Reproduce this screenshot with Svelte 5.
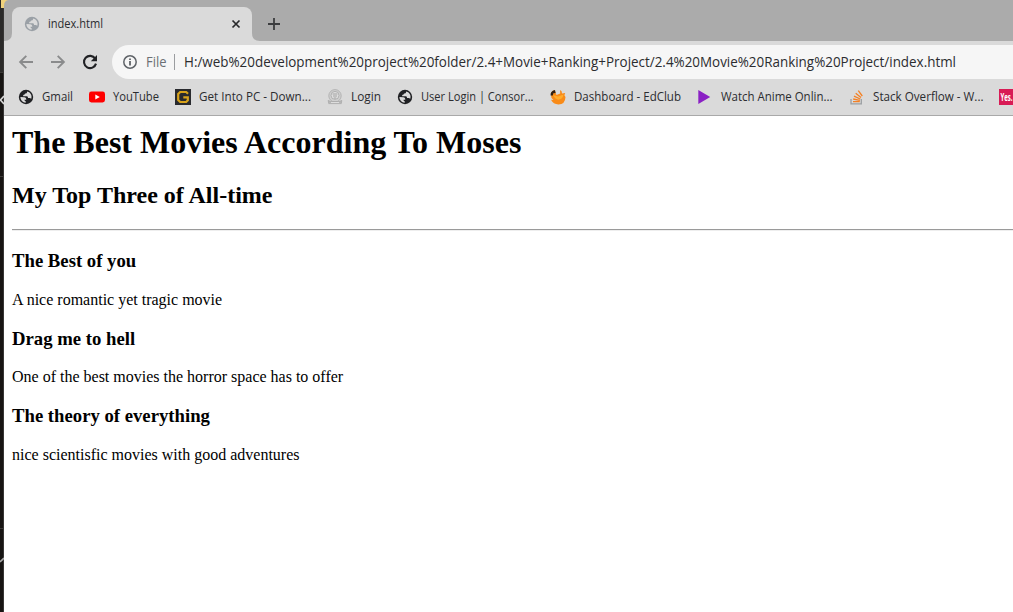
<script>
  const bookmarks = [
    { icon: 'globe', label: 'Gmail', width: 31, slot: 71 },
    { icon: 'youtube', label: 'YouTube', width: 46, slot: 86 },
    { icon: 'getpc', label: 'Get Into PC - Down...', width: 112, slot: 152 },
    { icon: 'camera', label: 'Login', width: 30, slot: 70 },
    { icon: 'globe', label: 'User Login | Consor...', width: 112.5, slot: 153 },
    { icon: 'edclub', label: 'Dashboard - EdClub', width: 107, slot: 147 },
    { icon: 'play', label: 'Watch Anime Onlin...', width: 111.5, slot: 152 },
    { icon: 'stack', label: 'Stack Overflow - W...', width: 110.5, slot: 150 },
    { icon: 'yes', label: '', width: 0, slot: 30 }
  ];

  const movies = [
    { title: 'The Best of you', text: 'A nice romantic yet tragic movie' },
    { title: 'Drag me to hell', text: 'One of the best movies the horror space has to offer' },
    { title: 'The theory of everything', text: 'nice scientisfic movies with good adventures' }
  ];
  const url = 'H:/web%20development%20project%20folder/2.4+Movie+Ranking+Project/2.4%20Movie%20Ranking%20Project/index.html';
</script>

{#snippet label(text, width, size, cls)}
  <svg class="label {cls}" {width} height="20">
    <text x="0" y={size > 13 ? 15 : 14} font-size={size} textLength={width} lengthAdjust="spacingAndGlyphs">{text}</text>
  </svg>
{/snippet}

{#snippet globe(fill, land)}
  <svg class="icon" viewBox="0 0 16 16">
    <circle cx="8" cy="8" r="7.2" {fill} />
    <path d="M9.2 2.5C9.1 4.2 8.3 4.5 7 4.6C6.9 5.6 6.2 6 5.2 6.1V7.3H8.9C9.8 7.4 10 8 10 9H11.6C12.4 9 12.9 9.4 13.1 10.1C14.5 6.8 12.8 3.4 9.2 2.5Z" fill={land} />
    <path d="M2.4 8.1C2.5 11.3 4.9 13.6 7.7 13.7V12.2C6.8 12.1 6.5 11.6 6.5 10.7H8.3C8.3 9.3 7.8 8.5 6.2 8.3Z" fill={land} />
  </svg>
{/snippet}

<div class="screen">
  <div class="edge">
    <svg width="4" height="612" viewBox="0 0 4 612">
      <rect width="4" height="612" fill="#171513" />
      <rect width="4" height="73" fill="#2b2a29" />
      <rect x="1" width="3" height="8" fill="#f0d27c" />
      <path d="M0 72.5H4M0 176.5H4M0 528.5H4" stroke="#3c3a38" />
      <path d="M3.5 8V612" stroke="#373635" />
      <path d="M4 96L0.5 100L4 104" stroke="#d8d8d8" stroke-width="1.6" fill="none" />
      <path d="M0 562L4 558" stroke="#aaa" stroke-width="1.6" />
    </svg>
  </div>
  <div class="window">
    <div class="tabs">
      <svg class="corner" width="8" height="41"><path d="M0 0H4.5Q0 0.5 0 6Z" fill="#f0d27c" /><path d="M0 41Q8 41 8 33V41Z" fill="#dadada" /></svg>
      <div class="tab">
        {@render globe('#9aa0a6', '#dadada')}
        {@render label('index.html', 55, 12, 'title')}
        <svg class="close" width="10" height="10" viewBox="0 0 10 10"><path d="M1.5 1.5L8.5 8.5M8.5 1.5L1.5 8.5" stroke="#28292b" stroke-width="1.7" /></svg>
      </div>
      <svg class="corner" width="8" height="8"><path d="M0 0Q0 8 8 8H0Z" fill="#dadada" /></svg>
      <svg class="plus" width="12" height="12" viewBox="0 0 12 12"><path d="M6 0V12M0 6H12" stroke="#3b3c3e" stroke-width="1.8" /></svg>
    </div>
    <div class="toolbar">
      <svg class="nav" viewBox="0 0 16 16"><path d="M15 8H2.3M8.3 1.8L2.1 8L8.3 14.2" stroke="#8a8b8c" stroke-width="1.9" fill="none" /></svg>
      <svg class="nav" viewBox="0 0 16 16"><path d="M1 8H13.7M7.7 1.8L13.9 8L7.7 14.2" stroke="#8a8b8c" stroke-width="1.9" fill="none" /></svg>
      <svg class="nav" viewBox="0 0 16 16"><path d="M13.2 4.6A6.1 6.1 0 1 0 14 9.6" stroke="#202124" stroke-width="2.1" fill="none" /><path d="M15 1V7.2H8.8Z" fill="#202124" /></svg>
      <div class="address">
        <svg class="info" width="14" height="14" viewBox="0 0 14 14"><circle cx="7" cy="7" r="6.2" fill="none" stroke="#5f6368" stroke-width="1.5" /><path d="M7 6V10.5M7 3.4V5" stroke="#4d5155" stroke-width="1.6" /></svg>
        {@render label('File', 20.5, 14, 'scheme')}
        <span class="divider"></span>
        {@render label(url, 772, 14, 'url')}
      </div>
    </div>
    <div class="bookmarks">
      {#each bookmarks as b}
        <div class="bookmark" style:width="{b.slot}px">
          {#if b.icon === 'globe'}
            {@render globe('#202124', '#dadada')}
          {:else}
            <svg class="icon" viewBox="0 0 16 16">
              {#if b.icon === 'youtube'}
                <rect x="0" y="2.5" width="16" height="11" rx="2.4" fill="#f00" /><path d="M6.3 5.6L10.8 8L6.3 10.4Z" fill="#fff" />
              {:else if b.icon === 'getpc'}
                <rect width="16" height="16" fill="#292a2e" /><path d="M13 4.8L11.2 3H5.2L3.2 5V11L5.2 13H11.2L12.8 11.4V8.4H8.3" fill="none" stroke="#d7a21b" stroke-width="2.2" />
              {:else if b.icon === 'camera'}
                <circle cx="8" cy="6.8" r="6.2" fill="#cfcfcf" stroke="#b4b4b4" /><circle cx="8" cy="6.4" r="4" fill="#dedede" stroke="#b2b2b2" /><path d="M5.6 5H10.4M6 7H10M6.8 9H9.2" stroke="#a4a4a4" /><path d="M1.2 11.4L4 12.6H12L14.8 11.4L14.3 14.6H1.7Z" fill="#b8b8b8" stroke="#a6a6a6" stroke-width=".7" /><path d="M4 13.5H12" stroke="#ddd" />
              {:else if b.icon === 'edclub'}
                <path d="M1 6Q1 2 4.6 1L6.5 6L10.2 4.4L10 1Q12.2 2 12 4.4L15.2 4.1L14.4 6.2L15.5 8Q15.2 15.4 8.4 15.4Q3.3 15.3 1 10.8L3.5 11Q.7 9 1 6Z" fill="#f98b18" /><path d="M3 6L8 7.5L13.5 5.6Q13 10 9 10.6Q5.4 11 3 6Z" fill="#ffac2c" /><path d="M0.6 6.6Q.1 2 5 1L5.6 4L3.3 4.3L2.8 6.6Z" fill="#302015" />
              {:else if b.icon === 'play'}
                <path d="M1.3 1L13.2 8L1.3 15Z" fill="#8a20c4" />
              {:else if b.icon === 'stack'}
                <path d="M2 10V14.9H12.3V10" fill="none" stroke="#9b9fa2" stroke-width="1.3" /><path d="M4 12.6H10.8M4.2 10L10.9 11.3M5 7.1L11.3 10M6.7 4.2L12 8.4M9.3 1.7L13.3 7" stroke="#f48024" stroke-width="1.3" />
              {:else}
                <rect width="16" height="16" fill="#d81b55" /><text x="1.5" y="12" font-size="10.5" font-weight="700" fill="#fff" textLength="12" lengthAdjust="spacingAndGlyphs">Yes.</text>
              {/if}
            </svg>
          {/if}
          {#if b.label}{@render label(b.label, b.width, 12, '')}{/if}
        </div>
      {/each}
    </div>
    <main>
      <h1>The Best Movies According To Moses</h1>
      <h2>My Top Three of All-time</h2>
      <hr />
      {#each movies as m}
        <h3>{m.title}</h3>
        <p>{m.text}</p>
      {/each}
    </main>
  </div>
</div>

<style>
  :global(body) { margin: 0; overflow: hidden; background: #fff; }
  .screen { display: flex; width: 1013px; height: 612px; overflow: hidden; font-family: 'Open Sans', sans-serif; }
  .edge { width: 4px; flex: none; }
  svg { display: block; flex: none; }
  .window { flex: 1; min-width: 0; overflow: hidden; display: flex; flex-direction: column; background: #fff; }
  .tabs { height: 41px; flex: none; display: flex; align-items: flex-end; background: #ababab; }
  .tab { width: 240px; height: 34px; box-sizing: border-box; display: flex; align-items: center; padding: 0 11px 0 12px; background: #dadada; border-radius: 8px 8px 0 0; }
  .close { margin-left: auto; }
  .plus { align-self: center; margin: 6px 0 0 8px; }
  .toolbar { height: 42px; flex: none; display: flex; align-items: center; padding-left: 14px; gap: 16px; background: #dadada; }
  .nav { width: 16px; height: 16px; }
  .address { width: 920px; height: 34px; flex: none; box-sizing: border-box; display: flex; align-items: center; padding-left: 11px; margin-left: -2px; background: #f6f6f6; border-radius: 17px 0 0 17px; }
  .divider { width: 1px; height: 16px; margin: 0 9px 0 7px; background: #9b9da0; }
  .label { overflow: visible; fill: #2b2c2f; }
  .scheme { margin-left: 9px; fill: #6b6f74; }
  .bookmarks { height: 32px; flex: none; display: flex; padding-left: 14px; background: #dadada; border-bottom: 1px solid #a9a9a9; }
  .bookmark { flex: none; display: flex; align-items: center; height: 28px; }
  .icon { width: 16px; height: 16px; margin-right: 8px; }
  main { padding: 0 0 0 8px; font-family: 'Liberation Serif', serif; color: #000; }
  h1 { margin: 8px 0 21.44px; font-size: 32px; }
  h2 { margin: 19.92px 0; font-size: 24px; }
  hr { margin: 0; border: 0; border-top: 1px solid #9a9a9a; border-bottom: 1px solid #eee; }
  h3 { margin: 18.72px 0; font-size: 18.72px; }
  p { margin: 16px 0; font-size: 16px; }
</style>
